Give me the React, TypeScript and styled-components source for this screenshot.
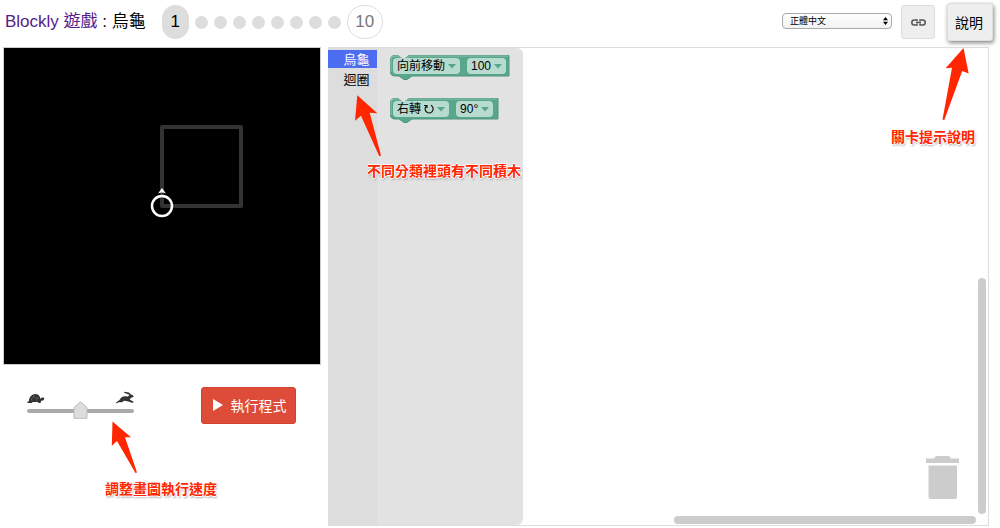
import React from "react";
import styled, { createGlobalStyle } from "styled-components";

const GlobalStyle = createGlobalStyle`
  * { box-sizing: border-box; }
  body {
    margin: 0;
    background: #fff;
    color: #000;
    font-family: "Liberation Sans", "Noto Sans CJK TC", sans-serif;
  }
  button, select { font-family: inherit; color: inherit; }
`;

const Page = styled.div`
  display: flex;
  flex-direction: column;
  min-height: 100vh;
  padding: 0 11px 2px 3px;
`;

const Header = styled.header`
  position: relative;
  z-index: 2;
  display: flex;
  align-items: center;
  height: 47px;
  padding-bottom: 3px;
  margin-right: -4px;
`;

const Title = styled.h1`
  margin: 0 16px 0 2px;
  font-size: 17px;
  line-height: 24px;
  font-weight: 400;
  white-space: nowrap;
`;

const HomeLink = styled.a`
  color: #551a8b;
  text-decoration: none;
`;

const Levels = styled.nav`
  display: flex;
  align-items: center;
  gap: 6px;
`;

const LevelDot = styled.a`
  width: 13px;
  height: 13px;
  border-radius: 50%;
  background: #ddd;
`;

const LevelNumber = styled.a<{ $current?: boolean }>`
  display: flex;
  align-items: center;
  justify-content: center;
  width: ${(p) => (p.$current ? 27 : 36)}px;
  height: 34px;
  border: ${(p) => (p.$current ? "none" : "1px solid #ddd")};
  border-radius: 18px;
  background: ${(p) => (p.$current ? "#ddd" : "#fff")};
  color: ${(p) => (p.$current ? "#000" : "#777")};
  font-size: 17px;
  text-decoration: none;
`;

const Tools = styled.div`
  display: flex;
  align-items: center;
  margin-left: auto;
`;

const SelectWrap = styled.label`
  position: relative;
  display: flex;
  margin: 0 9px 3px 0;
`;

const LanguageSelect = styled.select`
  appearance: none;
  width: 110px;
  height: 16px;
  padding: 0 7px;
  border: 1px solid #aaa;
  border-radius: 4px;
  background: linear-gradient(#fff, #f2f2f2);
  font-size: 9px;
  line-height: 14px;
`;

const SelectArrows = styled.svg`
  position: absolute;
  top: 4px;
  right: 4px;
  pointer-events: none;
`;

const LinkButton = styled.button`
  display: flex;
  align-items: center;
  justify-content: center;
  width: 34px;
  height: 34px;
  margin-right: 12px;
  padding: 0;
  border: 1px solid #ddd;
  border-radius: 3px;
  background: #eee;
`;

const HelpButton = styled.button`
  width: 46px;
  height: 38px;
  padding: 0 2px 0 0;
  border: 1px solid #ddd;
  border-radius: 3px;
  background: #eee;
  box-shadow: 1px 2px 4px #888;
  font-size: 14px;
`;

const Main = styled.main`
  display: flex;
  flex: 1;
  gap: 7px;
`;

const Side = styled.section`
  flex: none;
  width: 318px;
`;

const Display = styled.svg`
  display: block;
  width: 100%;
  border: 1px solid #ccc;
  background: #000;
`;

const Controls = styled.div`
  display: flex;
  align-items: flex-start;
  justify-content: space-between;
  padding: 22px 25px 0 24px;
`;

const Speed = styled.div`
  position: relative;
  width: 107px;
  padding-top: 6px;
`;

const SpeedIcons = styled.div`
  display: flex;
  justify-content: space-between;
  height: 9px;
`;

const thumb = `url("data:image/svg+xml,%3Csvg xmlns='http://www.w3.org/2000/svg' width='15' height='18'%3E%3Cpath d='M1 17.3V6.5L7.5 .8 14 6.5V17.3Z' fill='%23ddd' stroke='%23bbc'/%3E%3C/svg%3E")`;

const SpeedSlider = styled.input`
  appearance: none;
  display: block;
  width: 107px;
  height: 18px;
  margin: 0;
  background: none;
  &::-webkit-slider-runnable-track {
    height: 4px;
    border-radius: 2px;
    background: #aaa;
  }
  &::-webkit-slider-thumb {
    appearance: none;
    width: 15px;
    height: 18px;
    margin-top: -8px;
    background: ${thumb} no-repeat;
  }
`;

const RunButton = styled.button`
  display: flex;
  align-items: center;
  justify-content: center;
  gap: 8px;
  width: 95px;
  height: 37px;
  padding: 0 0 1px 2px;
  border: 1px solid #d04130;
  border-radius: 3px;
  background: #dd4b39;
  color: #fff;
  font-size: 14px;
`;

const Workspace = styled.section`
  position: relative;
  display: flex;
  flex: 1;
  border: 1px solid #ddd;
  border-left: 0;
`;

const Toolbox = styled.div`
  width: 49px;
  padding-top: 2px;
  background: #ddd;
`;

const Category = styled.button<{ $selected?: boolean }>`
  display: block;
  width: 100%;
  height: 18px;
  margin-bottom: 2px;
  padding: 1px 0 0 8px;
  border: 0;
  background: ${(p) => (p.$selected ? "#4d6df0" : "transparent")};
  color: ${(p) => (p.$selected ? "#fff" : "#000")};
  font-size: 13px;
  line-height: 18px;
`;

const Flyout = styled.div`
  display: flex;
  flex-direction: column;
  align-items: flex-start;
  gap: 21px;
  width: 146px;
  padding: 7px 0 0 13px;
  border-radius: 0 6px 6px 0;
  background: #e2e2e2;
`;

const BlockBox = styled.div`
  position: relative;
  display: flex;
  align-items: center;
  gap: 7px;
  height: 22px;
  padding: 0 3px;
`;

const BlockShape = styled.svg`
  position: absolute;
  top: 0;
  left: 0;
  overflow: visible;
`;

const Field = styled.button`
  position: relative;
  display: flex;
  align-items: center;
  gap: 3px;
  height: 16px;
  padding: 0 4px;
  border: 0;
  border-radius: 4px;
  background: #b7dbcf;
  font-size: 12px;
  line-height: 16px;
  white-space: nowrap;
`;

const Degree = styled.span`
  align-self: flex-start;
  margin-left: -3px;
`;

const ScrollBar = styled.div<{ $vertical?: boolean }>`
  position: absolute;
  border-radius: 4px;
  background: #ccc;
  ${(p) =>
    p.$vertical
      ? "right: 2px; bottom: 11px; width: 8px; height: 236px;"
      : "right: 12px; bottom: 1px; width: 302px; height: 8px;"}
`;

const Trash = styled.svg`
  position: absolute;
  right: 29px;
  bottom: 26px;
`;

const Note = styled.p`
  position: absolute;
  margin: 0;
  color: #ff2600;
  font-size: 14px;
  line-height: 20px;
  font-weight: 700;
  white-space: nowrap;
  text-shadow: 1px 0 #fff, -1px 0 #fff, 0 1px #fff, 0 -1px #fff, 1px 2px 2px #aaa;
`;

const Arrow = styled.svg`
  position: absolute;
  fill: #ff2600;
  pointer-events: none;
`;

const HelpNote = styled(Note)`
  top: 127px;
  right: 18px;
`;

const HelpArrow = styled(Arrow)`
  top: 48px;
  right: 24px;
`;

const CategoryNote = styled(Note)`
  top: 113px;
  left: 39px;
`;

const CategoryArrow = styled(Arrow)`
  top: 47px;
  left: 26px;
`;

const SpeedNote = styled(Note)`
  top: 92px;
  left: 78px;
`;

const SpeedArrow = styled(Arrow)`
  top: 34px;
  left: 84px;
`;

const Caret = () => (
  <svg width="8" height="5" viewBox="0 0 8 5" aria-hidden="true">
    <path d="M0 0H8L4 4.5Z" fill="#57a68b" />
  </svg>
);

function Block({ width, children }: { width: number; children: React.ReactNode }) {
  const outline = `M.5 5Q.5 .5 5 .5H8L12 3.5H15L19 .5H${width - 1}V21H22L17 24.5H14L9 21H5Q.5 21 .5 17Z`;
  return (
    <BlockBox>
      <BlockShape width={width} height="26" aria-hidden="true">
        <path d={outline} fill="#58a78c" stroke="#4e967d" />
        <path
          d={`M1 17V5Q1 1 5 1H8L12 4H15L19 1H${width - 2}`}
          fill="none"
          stroke="#8cc4b1"
        />
      </BlockShape>
      {children}
    </BlockBox>
  );
}

export default function App() {
  return (
    <>
      <GlobalStyle />
      <Page>
        <Header>
          <Title>
            <HomeLink href="#home">Blockly 遊戲</HomeLink> : 烏龜
          </Title>
          <Levels aria-label="關卡">
            <LevelNumber href="#1" $current>1</LevelNumber>
            {[2, 3, 4, 5, 6, 7, 8, 9].map((n) => (
              <LevelDot key={n} href={`#${n}`} aria-label={`${n}`} />
            ))}
            <LevelNumber href="#10">10</LevelNumber>
          </Levels>
          <Tools>
            <SelectWrap>
              <LanguageSelect aria-label="語言" defaultValue="zh-hant">
                <option value="zh-hant">正體中文</option>
              </LanguageSelect>
              <SelectArrows width="5" height="8" viewBox="0 0 5 8">
                <path d="M0 3.3L2.5 0 5 3.3ZM0 4.7H5L2.5 8Z" />
              </SelectArrows>
            </SelectWrap>
            <LinkButton aria-label="連結">
              <svg width="15" height="7" viewBox="0 0 15 7" fill="none" stroke="#555" strokeWidth="1.5">
                <path d="M6 2.2V1H3.3A2.5 2.5 0 0 0 3.3 6H6V4.8M9 2.2V1H11.7A2.5 2.5 0 0 1 11.7 6H9V4.8M5 3.5H10" />
              </svg>
            </LinkButton>
            <HelpButton>說明</HelpButton>
          </Tools>
          <HelpArrow width="27" height="73" viewBox="0 0 27 73">
            <path d="M21.5 0L26.7 25.5 20.2 23 2.3 72 .5 71.5 10 19.8 3.6 20.2Z" />
          </HelpArrow>
          <HelpNote>關卡提示說明</HelpNote>
        </Header>

        <Main>
          <Side>
            <Display viewBox="0 0 316 316" role="img" aria-label="烏龜">
              <rect x="158" y="79" width="79" height="79" fill="none" stroke="#333" strokeWidth="4" strokeLinejoin="round" />
              <circle cx="158" cy="158" r="10" fill="none" stroke="#fff" strokeWidth="2.5" />
              <path d="M158 140L162 145.5Q158 143.5 154 145.5Z" fill="#fff" />
            </Display>
            <Controls>
              <Speed>
                <SpeedIcons>
                  <svg width="18" height="11" viewBox="0 0 18 11" fill="#333">
                    <path d="M2 8C2 4 5 1 8.5 1S13 4 13.7 6C14 4.8 15.5 4 17 5 18 6 16.5 7.5 14.5 7.8L13.5 9 14 10H11.5L11 9H5.5L5 10H1L0 9Z" />
                    <path d="M4 5.5L7 4 10 5.5 12 4M7 4V2M10 5.5L9.5 8M5 8L4.5 5.5" stroke="#777" strokeWidth=".5" fill="none" />
                  </svg>
                  <svg width="18" height="11" viewBox="0 0 18 11" fill="#333" overflow="visible">
                    <path d="M0 9.5L3.5 7Q5 3.5 9 3.3L12 3.5 13.5 1.7 8 -.3 8.5 -1.3 13 -.6 14.8 1.2Q17.5 2 17.7 4L15 4.8 13.7 6.5 17.5 8.7 17 10 11.5 8.3 8 7.7 6 9.3 2.5 9.3 .5 10.5Z" />
                  </svg>
                </SpeedIcons>
                <SpeedSlider type="range" min="0" max="100" defaultValue="50" aria-label="速度" />
                <SpeedArrow width="27" height="52" viewBox="0 0 27 52">
                  <path d="M1.5 .5L20 16.3H14L26 51.5 24.5 52 6 20 .8 24.7Z" />
                </SpeedArrow>
                <SpeedNote>調整畫圖執行速度</SpeedNote>
              </Speed>
              <RunButton>
                <svg width="10" height="12" viewBox="0 0 10 12" aria-hidden="true">
                  <path d="M0 0L10 6 0 12Z" fill="#fff" />
                </svg>
                執行程式
              </RunButton>
            </Controls>
          </Side>

          <Workspace>
            <Toolbox>
              <Category $selected>烏龜</Category>
              <Category>迴圈</Category>
            </Toolbox>
            <Flyout>
              <Block width={120}>
                <Field>向前移動<Caret /></Field>
                <Field>100<Caret /></Field>
              </Block>
              <Block width={109}>
                <Field>
                  右轉
                  <svg width="10" height="10" viewBox="0 0 10 10" fill="none" stroke="#111" strokeWidth="1.2">
                    <path d="M2.5 2A4 4 0 1 0 8 2.2L7 1.2M0 1.5H3V4" />
                  </svg>
                  <Caret />
                </Field>
                <Field>90<Degree>°</Degree><Caret /></Field>
              </Block>
            </Flyout>
            <Trash width="33" height="43" viewBox="0 0 33 43" fill="#ccc">
              <path d="M0 2.5H8L10 0H23L25 2.5H33V7H0ZM2.5 9.5H31V41Q31 43 29 43H4.5Q2.5 43 2.5 41Z" />
            </Trash>
            <ScrollBar $vertical />
            <ScrollBar />
            <CategoryArrow width="28" height="62" viewBox="0 0 28 62">
              <path d="M3.3 .3L23.3 18.3 15.7 17.7 27 60.5 25.3 61.2 7 20.7 1 25.7Z" />
            </CategoryArrow>
            <CategoryNote>不同分類裡頭有不同積木</CategoryNote>
          </Workspace>
        </Main>
      </Page>
    </>
  );
}
